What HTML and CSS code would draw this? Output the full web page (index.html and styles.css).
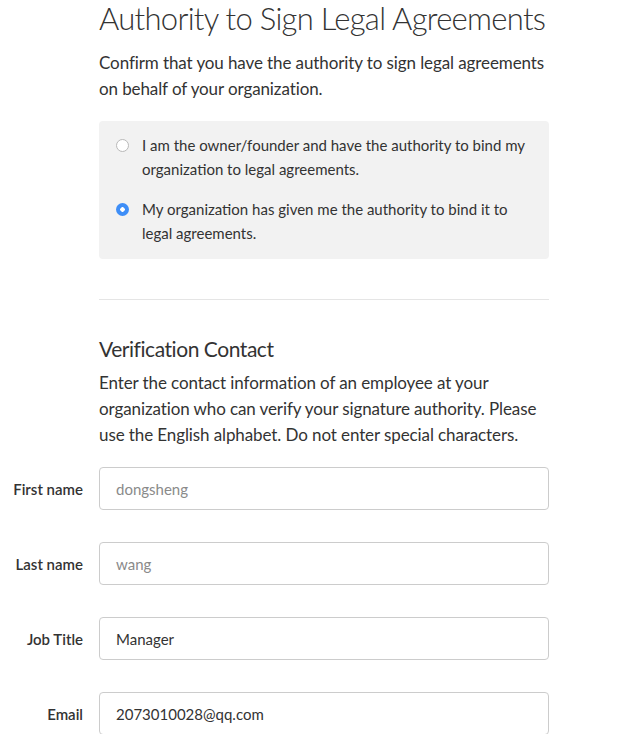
FILE: index.html
```html
<!DOCTYPE html>
<html>
<head>
<meta charset="utf-8">
<link rel="stylesheet" href="styles.css">
</head>
<body>
<div class="page">
  <section class="column">
    <h1 class="title">Authority to Sign Legal Agreements</h1>
    <p class="lead">Confirm that you have the authority to sign legal agreements on behalf of your organization.</p>
    <div class="options">
      <label class="option">
        <span class="radio"></span>
        <span class="option-text">I am the owner/founder and have the authority to bind my organization to legal agreements.</span>
      </label>
      <label class="option">
        <span class="radio radio-on"></span>
        <span class="option-text">My organization has given me the authority to bind it to legal agreements.</span>
      </label>
    </div>
    <hr class="divider">
    <h2 class="subtitle">Verification Contact</h2>
    <p class="lead">Enter the contact information of an employee at your organization who can verify your signature authority. Please use the English alphabet. Do not enter special characters.</p>
  </section>
  <div class="form">
    <div class="row">
      <span class="label">First name</span>
      <div class="field"><span class="value value-faded">dongsheng</span></div>
    </div>
    <div class="row">
      <span class="label">Last name</span>
      <div class="field"><span class="value value-faded">wang</span></div>
    </div>
    <div class="row">
      <span class="label">Job Title</span>
      <div class="field"><span class="value">Manager</span></div>
    </div>
    <div class="row">
      <span class="label">Email</span>
      <div class="field"><span class="value">2073010028@qq.com</span></div>
    </div>
  </div>
</div>
</body>
</html>
```
FILE: styles.css
```css
html, body {
  margin: 0;
  padding: 0;
  background: #fff;
}
body {
  font-family: Lato, "Open Sans", sans-serif;
  color: #333;
}
.page {
  width: 617px;
  overflow: hidden;
}
.column {
  margin-left: 99px;
  width: 450px;
}
.title {
  margin: -2px 0 0 0;
  font-size: 31px;
  line-height: 40px;
  font-weight: 300;
  letter-spacing: -0.7px;
  white-space: nowrap;
}
.lead {
  margin: 0;
  font-size: 17px;
  line-height: 26px;
  letter-spacing: -0.1px;
}
.title + .lead {
  margin-top: 12px;
}
.options {
  margin-top: 19px;
  background: #f2f2f2;
  border-radius: 4px;
  padding: 12px 17px 14px 17px;
  display: flex;
  flex-direction: column;
  gap: 16px;
}
.option {
  display: flex;
  gap: 13px;
  align-items: flex-start;
  font-size: 15px;
  line-height: 24px;
}
.radio {
  flex: none;
  width: 13px;
  height: 13px;
  margin-top: 6px;
  box-sizing: border-box;
  border: 1px solid #b9b9b9;
  border-radius: 50%;
  background: #fff;
}
.radio-on {
  border: none;
  background: radial-gradient(circle, #fff 0 2px, #3e8ef7 2.5px);
}
.divider {
  margin: 40px 0 0 0;
  border: none;
  border-top: 1px solid #e5e5e5;
  height: 0;
}
.subtitle {
  margin: 35px 0 0 0;
  font-size: 21px;
  line-height: 28px;
  font-weight: 400;
  letter-spacing: -0.45px;
}
.subtitle + .lead {
  margin-top: 7px;
}
.form {
  margin-top: 19px;
  display: flex;
  flex-direction: column;
  gap: 32px;
}
.row {
  display: grid;
  grid-template-columns: 83px 450px;
  column-gap: 16px;
  align-items: center;
}
.label {
  text-align: right;
  font-size: 15px;
  font-weight: 600;
  color: #333;
  white-space: nowrap;
}
.field {
  box-sizing: border-box;
  height: 43px;
  border: 1px solid #cccccc;
  border-radius: 4px;
  background: #fff;
  display: flex;
  align-items: center;
  padding-left: 16px;
}
.value {
  font-size: 15px;
  color: #333;
}
.value-faded {
  color: #8a8a8a;
}
```
